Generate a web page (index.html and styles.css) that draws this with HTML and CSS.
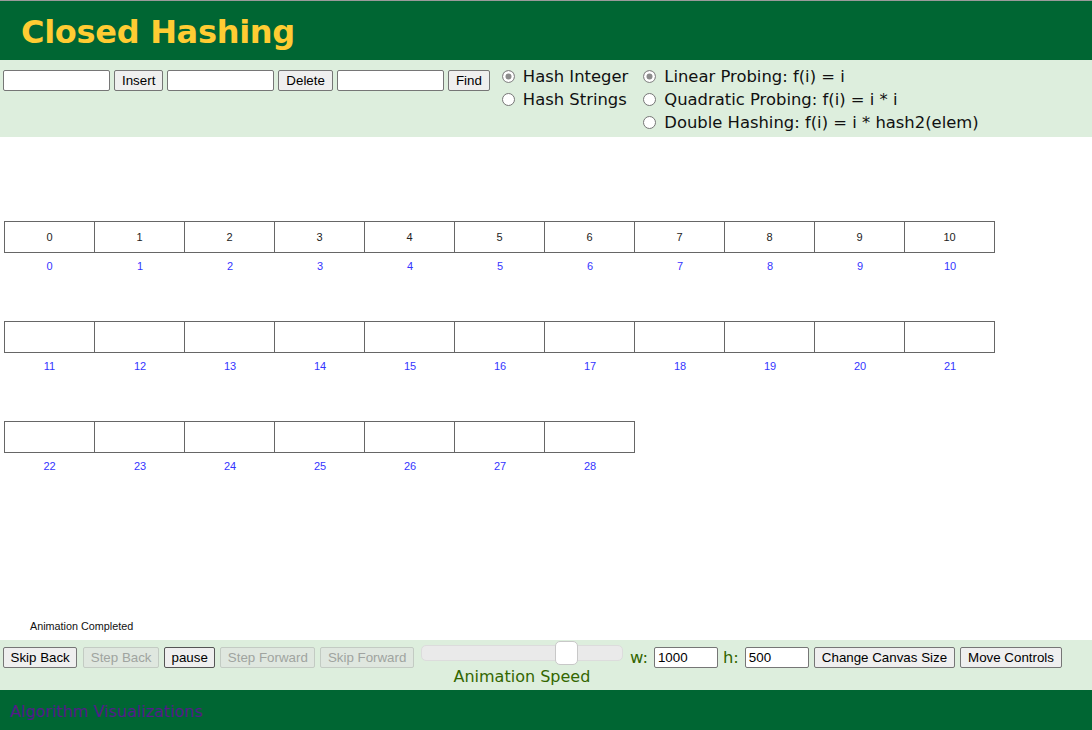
FILE: index.html
```html
<!DOCTYPE html>
<html>
<head>
<meta charset="utf-8">
<title>Closed Hashing</title>
<link rel="stylesheet" href="styles.css">
</head>
<body>
<header class="header"><h1 class="title">Closed Hashing</h1></header>
<div class="controls">
  <div class="ops">
    <input class="txt" type="text"><button class="btn">Insert</button>
    <input class="txt" type="text"><button class="btn">Delete</button>
    <input class="txt" type="text"><button class="btn">Find</button>
  </div>
  <div class="radios">
    <label class="opt"><span class="radio checked"></span>Hash Integer</label>
    <label class="opt"><span class="radio"></span>Hash Strings</label>
  </div>
  <div class="radios">
    <label class="opt"><span class="radio checked"></span>Linear Probing: f(i) = i</label>
    <label class="opt"><span class="radio"></span>Quadratic Probing: f(i) = i * i</label>
    <label class="opt"><span class="radio"></span>Double Hashing: f(i) = i * hash2(elem)</label>
  </div>
</div>
<main class="canvas">
  <div class="table">
    <div class="block">
      <div class="cells">
        <div class="cell">0</div><div class="cell">1</div><div class="cell">2</div><div class="cell">3</div><div class="cell">4</div><div class="cell">5</div><div class="cell">6</div><div class="cell">7</div><div class="cell">8</div><div class="cell">9</div><div class="cell">10</div>
      </div>
      <div class="labels">
        <span>0</span><span>1</span><span>2</span><span>3</span><span>4</span><span>5</span><span>6</span><span>7</span><span>8</span><span>9</span><span>10</span>
      </div>
    </div>
    <div class="block">
      <div class="cells">
        <div class="cell"></div><div class="cell"></div><div class="cell"></div><div class="cell"></div><div class="cell"></div><div class="cell"></div><div class="cell"></div><div class="cell"></div><div class="cell"></div><div class="cell"></div><div class="cell"></div>
      </div>
      <div class="labels">
        <span>11</span><span>12</span><span>13</span><span>14</span><span>15</span><span>16</span><span>17</span><span>18</span><span>19</span><span>20</span><span>21</span>
      </div>
    </div>
    <div class="block">
      <div class="cells">
        <div class="cell"></div><div class="cell"></div><div class="cell"></div><div class="cell"></div><div class="cell"></div><div class="cell"></div><div class="cell"></div>
      </div>
      <div class="labels">
        <span>22</span><span>23</span><span>24</span><span>25</span><span>26</span><span>27</span><span>28</span>
      </div>
    </div>
  </div>
  <div class="status">Animation Completed</div>
</main>
<div class="animbar">
  <div class="group">
    <button class="btn">Skip Back</button>
    <button class="btn disabled">Step Back</button>
    <button class="btn dark">pause</button>
    <button class="btn disabled">Step Forward</button>
    <button class="btn disabled">Skip Forward</button>
  </div>
  <div class="speed">
    <div class="slider"><div class="thumb"></div></div>
    <div class="speed-label">Animation Speed</div>
  </div>
  <div class="group size">
    <span class="lbl">w:</span><input class="num" type="text" value="1000">
    <span class="lbl">h:</span><input class="num" type="text" value="500">
    <button class="btn">Change Canvas Size</button>
    <button class="btn">Move Controls</button>
  </div>
</div>
<footer class="footer"><a class="foot-link" href="#">Algorithm Visualizations</a></footer>
</body>
</html>
```
FILE: styles.css
```css
*{box-sizing:border-box;}
html,body{margin:0;padding:0;}
body{width:1092px;height:730px;overflow:hidden;background:#fff;font-family:"DejaVu Sans",Verdana,sans-serif;border-top:1px solid #9a9a9a;}

.header{height:59px;background:#006633;display:flex;align-items:center;padding-left:21px;}
.title{margin:0;color:#ffcc33;font-family:"DejaVu Sans",Verdana,sans-serif;font-weight:bold;font-size:32px;letter-spacing:-0.3px;line-height:1;position:relative;top:1px;}

.controls{height:77px;background:#ddeedd;display:flex;align-items:flex-start;padding:5px 0 0 3px;}
.ops{display:flex;align-items:center;gap:4px;margin-top:5px;margin-right:12px;}
.ops .btn{padding:0 7px;}
.txt{width:107px;height:21px;border:1px solid #767676;border-radius:2px;background:#fff;margin:0;padding:0 2px;font-size:13px;}
.btn{height:21px;margin:0;padding:0 6.5px;border:1px solid #767676;border-radius:2px;background:#efefef;color:#000;font-family:"Liberation Sans",Arial,sans-serif;font-size:13.333px;line-height:19px;white-space:nowrap;}
.btn.disabled{color:#a0a4a0;border-color:#c3cbc3;background:#dfe7df;}
.btn.dark{border-color:#555;}

.radios{display:flex;flex-direction:column;margin-right:15px;}
.opt{display:flex;align-items:center;height:23px;font-size:16.4px;color:#111;white-space:nowrap;}
.radio{width:13px;height:13px;border-radius:50%;border:1px solid #767676;background:#fff;margin:0 8px 0 0;flex:none;}
.radio.checked{background:#8c8c8c;border-color:#8c8c8c;box-shadow:inset 0 0 0 2.5px #fff;}

.canvas{height:503px;position:relative;background:#fff;}
.table{padding:84px 0 0 4px;display:flex;flex-direction:column;gap:42px;}
.cells{display:flex;}
.cell{width:91px;height:32px;border:1px solid #666;margin-left:-1px;display:flex;align-items:center;justify-content:center;font-family:"Liberation Sans",Arial,sans-serif;font-size:11px;color:#222;padding-bottom:1px;}
.cell:first-child{margin-left:0;}
.labels{display:flex;height:26px;align-items:center;}
.labels span{width:90px;text-align:center;font-family:"Liberation Sans",Arial,sans-serif;font-size:11px;color:#3434ff;}
.labels span:first-child{width:91px;}
.status{position:absolute;left:30px;top:483px;font-family:"Liberation Sans",Arial,sans-serif;font-size:10.8px;color:#111;}

.animbar{height:50px;background:#ddeedd;display:flex;align-items:flex-start;padding:7px 0 0 3px;}
.group{display:flex;align-items:center;gap:5px;}
.group .btn:first-child{margin-right:1px;}
.speed{display:flex;flex-direction:column;align-items:center;margin:-6px 6px 0 7px;width:202px;}
.slider{width:202px;height:16px;margin-top:4px;background:#eaeaea;border:1px solid #dcdcdc;border-radius:5px;position:relative;}
.thumb{position:absolute;left:133px;top:-5px;width:23px;height:24px;background:#fff;border:1px solid #c8c8c8;border-radius:5px;}
.speed-label{margin-top:6px;font-size:16px;color:#336600;white-space:nowrap;}
.size{gap:0;}
.lbl{font-size:16.4px;color:#336600;margin:0 6px 0 1px;}
.num{width:64px;height:21px;border:1px solid #767676;border-radius:2px;background:#fff;margin:0 4px 0 0;padding:0 3px;font-family:"Liberation Sans",Arial,sans-serif;font-size:13.333px;}
.num + .btn{margin-left:1px;}
.size .btn{margin-right:5px;padding:0 7px;}

.footer{height:40px;background:#006633;display:flex;align-items:center;padding-left:10px;}
.foot-link{color:#551a8b;text-decoration:none;font-family:"DejaVu Sans",Verdana,sans-serif;font-size:16px;position:relative;top:1px;}
```
